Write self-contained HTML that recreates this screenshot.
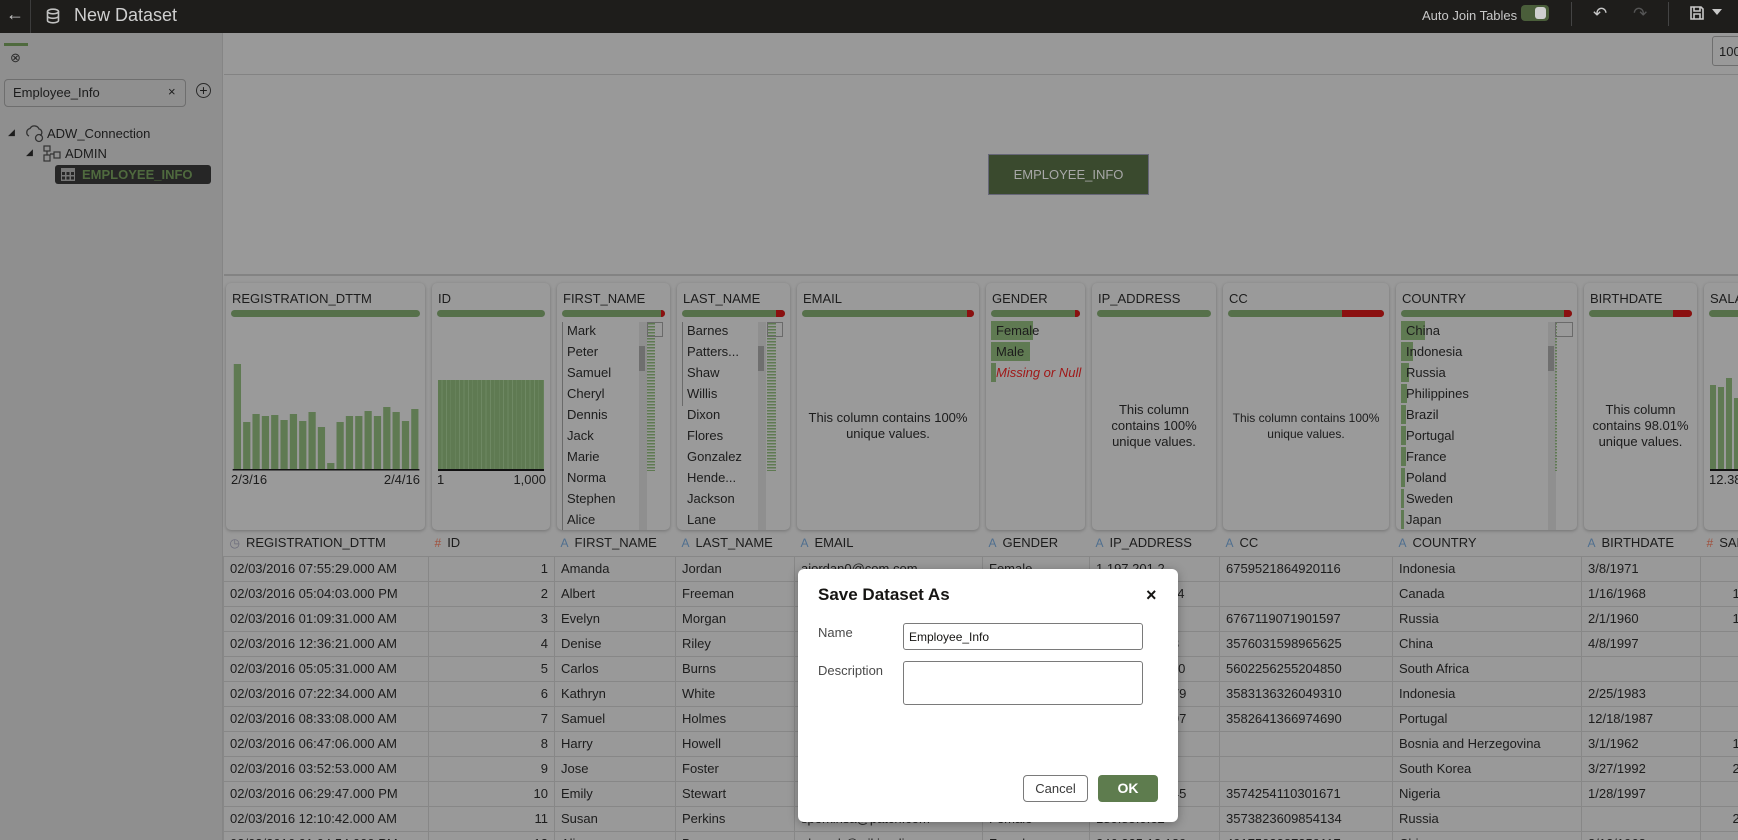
<!DOCTYPE html>
<html><head><meta charset="utf-8"><style>
*{margin:0;padding:0;box-sizing:border-box}
html{width:1738px;height:840px;overflow:hidden}
body{width:1738px;height:840px;overflow:hidden;position:relative;background:#999;font-family:"Liberation Sans",sans-serif;color:#1c1c1c;font-size:13px}
.a{position:absolute}
.top{left:0;top:0;width:1738px;height:33px;background:#1e1d1b}
.left{left:0;top:33px;width:223px;height:807px;background:#8f8f8f;border-right:1px solid #858585}
.card{position:absolute;top:283px;height:247px;background:#9a9a9a;border-radius:5px;box-shadow:0 1px 3px rgba(0,0,0,.25);overflow:hidden}
.card .h{position:absolute;left:6px;top:8px;font-size:13px;white-space:nowrap}
.card .bar{position:absolute;left:5px;right:5px;height:7px;border-radius:4px;background:#56704a;top:27px}
.card .red{position:absolute;top:0;right:0;height:7px;background:#8b1010;border-radius:0 4px 4px 0}
.msg{position:absolute;left:2px;right:2px;text-align:center;font-size:13px;line-height:16px}
.li{position:absolute;font-size:13px;white-space:nowrap}
table{position:absolute;left:223px;top:530px;border-collapse:collapse;table-layout:fixed;width:1577px}
td{height:25px;border:1px solid #878787;padding:0 6px;white-space:nowrap;overflow:hidden;font-size:13px}
tr.hd td{height:26px;border-left:none;border-right:none;border-top:none}
.r{text-align:right}
.ic{font-size:12px;margin-right:6px}
.ia{color:#4f6f8f}.ih{color:#a0503c}.icl{color:#6a6a7a}
.sb{position:absolute;top:39px;width:8px;height:208px;background:#8f8f8f}
.sbt{position:absolute;top:63px;width:6px;height:25px;background:#6f6f6f}
.mc{position:absolute;top:40px;height:148px;background:repeating-linear-gradient(180deg,#5f7a52 0 1.5px,transparent 1.5px 3px)}
.mb{position:absolute;top:39px;width:16px;height:15px;border:1px solid #6a6a6a}
.gb{position:absolute;left:5px;height:19px;background:#5f7a52}
</style></head><body>

<div class="a top">
 <div class="a" style="left:6px;top:4px;color:#c8c8c8;font-size:18px">&#8592;</div>
 <div class="a" style="left:30px;top:0;width:1px;height:33px;background:#3c3c3c"></div>
 <svg class="a" style="left:46px;top:8px" width="14" height="16" viewBox="0 0 14 16"><g fill="none" stroke="#c0c0c0" stroke-width="1.6"><ellipse cx="7" cy="3.5" rx="5.5" ry="2.3"/><path d="M1.5 3.5v9c0 1.3 2.5 2.3 5.5 2.3s5.5-1 5.5-2.3v-9M1.5 8c0 1.3 2.5 2.3 5.5 2.3s5.5-1 5.5-2.3"/></g></svg>
 <div class="a" style="left:74px;top:5px;color:#cfcfcf;font-size:18px">New Dataset</div>
 <div class="a" style="left:1422px;top:8px;color:#c8c8c8;font-size:13px">Auto Join Tables</div>
 <div class="a" style="left:1521px;top:5px;width:28px;height:16px;border-radius:4px;background:#4a5e3a"><div class="a" style="left:14px;top:2px;width:11px;height:12px;border-radius:3px;background:#cfcfcf"></div></div>
 <div class="a" style="left:1571px;top:2px;width:1px;height:24px;background:#444"></div>
 <div class="a" style="left:1593px;top:4px;color:#c8c8c8;font-size:17px">&#8630;</div>
 <div class="a" style="left:1633px;top:4px;color:#555;font-size:17px">&#8631;</div>
 <div class="a" style="left:1668px;top:2px;width:1px;height:24px;background:#444"></div>
 <svg class="a" style="left:1690px;top:6px" width="14" height="14" viewBox="0 0 14 14"><path d="M1 1h10l2 2v10H1z M4 1v4h6V1 M4 13V8h6v5" fill="none" stroke="#c8c8c8" stroke-width="1.6"/></svg>
 <div class="a" style="left:1712px;top:9px;border-left:5px solid transparent;border-right:5px solid transparent;border-top:6px solid #c8c8c8"></div>
</div>

<div class="a left">
 <div class="a" style="left:4px;top:10px;width:24px;height:3px;background:#4f6a3e"></div>
 <div class="a" style="left:10px;top:17px;font-size:13px;color:#2a2a2a">&#8855;</div>
 <div class="a" style="left:4px;top:46px;width:182px;height:28px;border:1px solid #6e6e6e;border-radius:4px"></div>
 <div class="a" style="left:13px;top:52px;font-size:13px">Employee_Info</div>
 <div class="a" style="left:168px;top:51px;font-size:13px">&#215;</div>
 <div class="a" style="left:196px;top:50px;width:15px;height:15px;border:1.5px solid #2a2a2a;border-radius:50%;text-align:center;line-height:12px;font-size:14px">+</div>
 <div class="a" style="left:8px;top:94px;font-size:9px">&#9698;</div>
 <svg class="a" style="left:25px;top:92px" width="20" height="18" viewBox="0 0 20 18"><path d="M4 11a4 4 0 0 1 1-7.5A5 5 0 0 1 14 4a3.5 3.5 0 0 1 1 6.5" fill="none" stroke="#333" stroke-width="1.3"/><circle cx="14" cy="13" r="3.5" fill="none" stroke="#333" stroke-width="1.3"/></svg>
 <div class="a" style="left:47px;top:93px;font-size:13px">ADW_Connection</div>
 <div class="a" style="left:26px;top:114px;font-size:9px">&#9698;</div>
 <svg class="a" style="left:43px;top:112px" width="18" height="17" viewBox="0 0 18 17"><g fill="none" stroke="#333" stroke-width="1.2"><rect x="1" y="1" width="6" height="5"/><rect x="1" y="10" width="6" height="6"/><rect x="11" y="7" width="6" height="6"/><path d="M4 6v4M7 9h4"/></g></svg>
 <div class="a" style="left:65px;top:113px;font-size:13px">ADMIN</div>
 <div class="a" style="left:55px;top:132px;width:156px;height:19px;background:#262626;border-radius:3px"></div>
 <svg class="a" style="left:61px;top:135px" width="14" height="13" viewBox="0 0 14 13"><rect x="0" y="0" width="14" height="13" fill="#777"/><g fill="#262626"><rect x="1" y="4" width="3" height="3"/><rect x="5.5" y="4" width="3" height="3"/><rect x="10" y="4" width="3" height="3"/><rect x="1" y="8.5" width="3" height="3"/><rect x="5.5" y="8.5" width="3" height="3"/><rect x="10" y="8.5" width="3" height="3"/></g></svg>
 <div class="a" style="left:82px;top:134px;font-size:13px;color:#4f6a3e;font-weight:bold">EMPLOYEE_INFO</div>
</div>

<div class="a" style="left:224px;top:74px;width:1514px;height:1px;background:#838383"></div>
<div class="a" style="left:1712px;top:36px;width:40px;height:30px;border:1px solid #6e6e6e;border-radius:3px;padding:7px 6px;font-size:13px">100</div>
<div class="a" style="left:224px;top:274px;width:1514px;height:2px;background:#838383"></div>
<div class="a" style="left:988px;top:154px;width:161px;height:41px;background:#3a4a2e;border:1px solid #667;color:#a8a8a8;font-size:13px;text-align:center;line-height:39px">EMPLOYEE_INFO</div>

<!-- cards -->
<div class="card" style="left:226px;width:199px"><div class="h">REGISTRATION_DTTM</div><div class="bar"></div>
 <svg class="a" style="left:0;top:0" width="199" height="247" viewBox="0 0 179 247" preserveAspectRatio="none"><g fill="#5f7a52">
 <rect x="7" y="81" width="6.5" height="105"/><rect x="15.4" y="139" width="6.5" height="47"/><rect x="23.8" y="131" width="6.5" height="55"/><rect x="32.2" y="133" width="6.5" height="53"/><rect x="40.6" y="132" width="6.5" height="54"/><rect x="49" y="137" width="6.5" height="49"/><rect x="57.4" y="131" width="6.5" height="55"/><rect x="65.8" y="138" width="6.5" height="48"/><rect x="74.2" y="129" width="6.5" height="57"/><rect x="82.6" y="144" width="6.5" height="42"/><rect x="91" y="180" width="6.5" height="6"/><rect x="99.4" y="139" width="6.5" height="47"/><rect x="107.8" y="133" width="6.5" height="53"/><rect x="116.2" y="133" width="6.5" height="53"/><rect x="124.6" y="128" width="6.5" height="58"/><rect x="133" y="133" width="6.5" height="53"/><rect x="141.4" y="124" width="6.5" height="62"/><rect x="149.8" y="129" width="6.5" height="57"/><rect x="158.2" y="138" width="6.5" height="48"/><rect x="166.6" y="126" width="6.5" height="60"/></g>
 <rect x="6" y="186" width="168" height="1.5" fill="#111"/></svg>
 <div class="li" style="left:5px;top:189px">2/3/16</div><div class="li" style="right:5px;top:189px">2/4/16</div></div>

<div class="card" style="left:432px;width:118px"><div class="h">ID</div><div class="bar"></div>
 <div class="a" style="left:6px;top:97px;width:106px;height:89px;background:repeating-linear-gradient(90deg,#5f7a52 0 3.6px,#6e8863 3.6px 4.4px)"></div>
 <div class="a" style="left:6px;top:186px;width:106px;height:1.5px;background:#111"></div>
 <div class="li" style="left:5px;top:189px">1</div><div class="li" style="right:4px;top:189px">1,000</div></div>

<div class="card" style="left:557px;width:113px"><div class="h">FIRST_NAME</div><div class="bar"><div class="red" style="width:4px"></div></div>
 <div class="a" style="left:5px;top:39px;width:1px;height:208px;background:#6a6a6a"></div>
 <div class="sb" style="left:82px"></div><div class="sbt" style="left:82px"></div>
 <div class="mc" style="left:90px;width:8px"></div><div class="mb" style="left:90px"></div>
 <div class="li" style="left:10px;top:40px">Mark</div><div class="li" style="left:10px;top:61px">Peter</div><div class="li" style="left:10px;top:82px">Samuel</div><div class="li" style="left:10px;top:103px">Cheryl</div><div class="li" style="left:10px;top:124px">Dennis</div><div class="li" style="left:10px;top:145px">Jack</div><div class="li" style="left:10px;top:166px">Marie</div><div class="li" style="left:10px;top:187px">Norma</div><div class="li" style="left:10px;top:208px">Stephen</div><div class="li" style="left:10px;top:229px">Alice</div></div>

<div class="card" style="left:677px;width:113px"><div class="h">LAST_NAME</div><div class="bar"><div class="red" style="width:9px"></div></div>
 <div class="a" style="left:5px;top:39px;width:1px;height:84px;background:#6a6a6a"></div>
 <div class="sb" style="left:81px"></div><div class="sbt" style="left:81px"></div>
 <div class="mc" style="left:90px;width:9px"></div><div class="mb" style="left:90px"></div>
 <div class="li" style="left:10px;top:40px">Barnes</div><div class="li" style="left:10px;top:61px">Patters...</div><div class="li" style="left:10px;top:82px">Shaw</div><div class="li" style="left:10px;top:103px">Willis</div><div class="li" style="left:10px;top:124px">Dixon</div><div class="li" style="left:10px;top:145px">Flores</div><div class="li" style="left:10px;top:166px">Gonzalez</div><div class="li" style="left:10px;top:187px">Hende...</div><div class="li" style="left:10px;top:208px">Jackson</div><div class="li" style="left:10px;top:229px">Lane</div></div>

<div class="card" style="left:797px;width:182px"><div class="h">EMAIL</div><div class="bar"><div class="red" style="width:7px"></div></div>
 <div class="msg" style="top:127px">This column contains 100%<br>unique values.</div></div>

<div class="card" style="left:986px;width:99px"><div class="h">GENDER</div><div class="bar"><div class="red" style="width:5px"></div></div>
 <div class="gb" style="top:38px;width:42px"></div><div class="li" style="left:10px;top:40px">Female</div>
 <div class="gb" style="top:59px;width:39px"></div><div class="li" style="left:10px;top:61px">Male</div>
 <div class="gb" style="top:80px;width:5px"></div><div class="li" style="left:10px;top:82px;color:#a01818;font-style:italic">Missing or Null</div></div>

<div class="card" style="left:1092px;width:124px"><div class="h">IP_ADDRESS</div><div class="bar"></div>
 <div class="msg" style="top:119px">This column<br>contains 100%<br>unique values.</div></div>

<div class="card" style="left:1223px;width:166px"><div class="h">CC</div><div class="bar"><div class="red" style="width:42px"></div></div>
 <div class="msg" style="top:127px;font-size:12px;white-space:nowrap">This column contains 100%<br>unique values.</div></div>

<div class="card" style="left:1396px;width:181px"><div class="h">COUNTRY</div><div class="bar"><div class="red" style="width:8px"></div></div>
 <div class="gb" style="top:38px;width:24px"></div>
 <div class="gb" style="top:59px;width:12px"></div>
 <div class="gb" style="top:80px;width:8px"></div>
 <div class="gb" style="top:101px;width:6px"></div>
 <div class="gb" style="top:122px;width:5px"></div>
 <div class="gb" style="top:143px;width:5px"></div>
 <div class="gb" style="top:164px;width:5px"></div>
 <div class="gb" style="top:185px;width:4px"></div>
 <div class="gb" style="top:206px;width:3px"></div>
 <div class="gb" style="top:227px;width:3px"></div>
 <div class="sb" style="left:152px"></div><div class="sbt" style="left:152px"></div>
 <div class="mc" style="left:159px;width:2px"></div><div class="mb" style="left:159px;width:18px"></div>
 <div class="li" style="left:10px;top:40px">China</div><div class="li" style="left:10px;top:61px">Indonesia</div><div class="li" style="left:10px;top:82px">Russia</div><div class="li" style="left:10px;top:103px">Philippines</div><div class="li" style="left:10px;top:124px">Brazil</div><div class="li" style="left:10px;top:145px">Portugal</div><div class="li" style="left:10px;top:166px">France</div><div class="li" style="left:10px;top:187px">Poland</div><div class="li" style="left:10px;top:208px">Sweden</div><div class="li" style="left:10px;top:229px">Japan</div></div>

<div class="card" style="left:1584px;width:113px"><div class="h">BIRTHDATE</div><div class="bar"><div class="red" style="width:19px"></div></div>
 <div class="msg" style="top:119px">This column<br>contains 98.01%<br>unique values.</div></div>

<div class="card" style="left:1704px;width:60px"><div class="h">SALARY</div><div class="bar"></div>
 <div class="a" style="left:6px;top:102px;width:6px;height:84px;background:#5f7a52"></div>
 <div class="a" style="left:14px;top:104px;width:6px;height:82px;background:#5f7a52"></div>
 <div class="a" style="left:22px;top:95px;width:6px;height:91px;background:#5f7a52"></div>
 <div class="a" style="left:30px;top:115px;width:6px;height:71px;background:#5f7a52"></div>
 <div class="a" style="left:6px;top:186px;width:50px;height:1.5px;background:#111"></div>
 <div class="li" style="left:5px;top:189px">12.38</div></div>

<table>
<colgroup><col style="width:205px"><col style="width:126px"><col style="width:121px"><col style="width:119px"><col style="width:188px"><col style="width:107px"><col style="width:130px"><col style="width:173px"><col style="width:189px"><col style="width:119px"><col style="width:100px"></colgroup>
<tr class="hd"><td><span class="ic icl">&#9719;</span>REGISTRATION_DTTM</td><td><span class="ic ih">#</span>ID</td><td><span class="ic ia">A</span>FIRST_NAME</td><td><span class="ic ia">A</span>LAST_NAME</td><td><span class="ic ia">A</span>EMAIL</td><td><span class="ic ia">A</span>GENDER</td><td><span class="ic ia">A</span>IP_ADDRESS</td><td><span class="ic ia">A</span>CC</td><td><span class="ic ia">A</span>COUNTRY</td><td><span class="ic ia">A</span>BIRTHDATE</td><td><span class="ic ih">#</span>SALARY</td></tr>
<tr><td>02/03/2016 07:55:29.000 AM</td><td class="r">1</td><td>Amanda</td><td>Jordan</td><td>ajordan0@com.com</td><td>Female</td><td>1.197.201.2</td><td>6759521864920116</td><td>Indonesia</td><td>3/8/1971</td><td class="r">49756.53</td></tr>
<tr><td>02/03/2016 05:04:03.000 PM</td><td class="r">2</td><td>Albert</td><td>Freeman</td><td>afreeman1@is.gd</td><td>Male</td><td>218.111.175.34</td><td></td><td>Canada</td><td>1/16/1968</td><td class="r">150280.17</td></tr>
<tr><td>02/03/2016 01:09:31.000 AM</td><td class="r">3</td><td>Evelyn</td><td>Morgan</td><td>emorgan2@altervista.org</td><td>Female</td><td>7.161.136.94</td><td>6767119071901597</td><td>Russia</td><td>2/1/1960</td><td class="r">144972.51</td></tr>
<tr><td>02/03/2016 12:36:21.000 AM</td><td class="r">4</td><td>Denise</td><td>Riley</td><td>driley3@gmpg.org</td><td>Female</td><td>140.35.109.83</td><td>3576031598965625</td><td>China</td><td>4/8/1997</td><td class="r">90263.05</td></tr>
<tr><td>02/03/2016 05:05:31.000 AM</td><td class="r">5</td><td>Carlos</td><td>Burns</td><td>cburns4@miitbeian.gov.cn</td><td></td><td>169.113.235.40</td><td>5602256255204850</td><td>South Africa</td><td></td><td class="r"></td></tr>
<tr><td>02/03/2016 07:22:34.000 AM</td><td class="r">6</td><td>Kathryn</td><td>White</td><td>kwhite5@google.com</td><td>Female</td><td>195.131.81.179</td><td>3583136326049310</td><td>Indonesia</td><td>2/25/1983</td><td class="r">69227.11</td></tr>
<tr><td>02/03/2016 08:33:08.000 AM</td><td class="r">7</td><td>Samuel</td><td>Holmes</td><td>sholmes6@foxnews.com</td><td>Male</td><td>232.234.81.197</td><td>3582641366974690</td><td>Portugal</td><td>12/18/1987</td><td class="r">14247.62</td></tr>
<tr><td>02/03/2016 06:47:06.000 AM</td><td class="r">8</td><td>Harry</td><td>Howell</td><td>hhowell7@eepurl.com</td><td>Male</td><td>91.235.51.73</td><td></td><td>Bosnia and Herzegovina</td><td>3/1/1962</td><td class="r">186469.43</td></tr>
<tr><td>02/03/2016 03:52:53.000 AM</td><td class="r">9</td><td>Jose</td><td>Foster</td><td>jfoster8@yelp.com</td><td>Male</td><td>132.31.53.61</td><td></td><td>South Korea</td><td>3/27/1992</td><td class="r">231067.84</td></tr>
<tr><td>02/03/2016 06:29:47.000 PM</td><td class="r">10</td><td>Emily</td><td>Stewart</td><td>estewart9@opensource.org</td><td>Female</td><td>143.28.251.245</td><td>3574254110301671</td><td>Nigeria</td><td>1/28/1997</td><td class="r">27234.28</td></tr>
<tr><td>02/03/2016 12:10:42.000 AM</td><td class="r">11</td><td>Susan</td><td>Perkins</td><td>sperkinsa@patch.com</td><td>Female</td><td>180.85.0.62</td><td>3573823609854134</td><td>Russia</td><td></td><td class="r">210001.95</td></tr>
<tr><td>02/03/2016 01:04:54.000 PM</td><td class="r">12</td><td>Alice</td><td>Berry</td><td>aberryb@wikipedia.org</td><td>Female</td><td>246.225.12.189</td><td>4917503387359117</td><td>China</td><td>8/12/1968</td><td class="r">22944.53</td></tr>
</table>

<!-- dialog -->
<div class="a" style="left:798px;top:569px;width:380px;height:253px;background:#fff;border-radius:6px;box-shadow:0 2px 10px rgba(0,0,0,.3)">
 <div class="a" style="left:20px;top:16px;font-size:17px;font-weight:bold;color:#161513">Save Dataset As</div>
 <div class="a" style="left:348px;top:16px;font-size:18px;font-weight:bold;color:#161513">&#215;</div>
 <div class="a" style="left:20px;top:56px;font-size:13px;color:#4a4a4a">Name</div>
 <div class="a" style="left:20px;top:94px;font-size:13px;color:#4a4a4a">Description</div>
 <div class="a" style="left:105px;top:54px;width:240px;height:27px;border:1px solid #7a7a7a;border-radius:3px;padding:6px 5px;font-size:12px;color:#161513">Employee_Info</div>
 <div class="a" style="left:105px;top:92px;width:240px;height:44px;border:1px solid #7a7a7a;border-radius:3px"></div>
 <div class="a" style="left:225px;top:206px;width:65px;height:27px;border:1px solid #7a7a7a;border-radius:4px;text-align:center;line-height:25px;font-size:13px;color:#3a3a3a">Cancel</div>
 <div class="a" style="left:300px;top:206px;width:60px;height:27px;background:#5e7c4e;border-radius:4px;text-align:center;line-height:27px;font-size:14px;font-weight:bold;color:#fff">OK</div>
</div>
</body></html>
